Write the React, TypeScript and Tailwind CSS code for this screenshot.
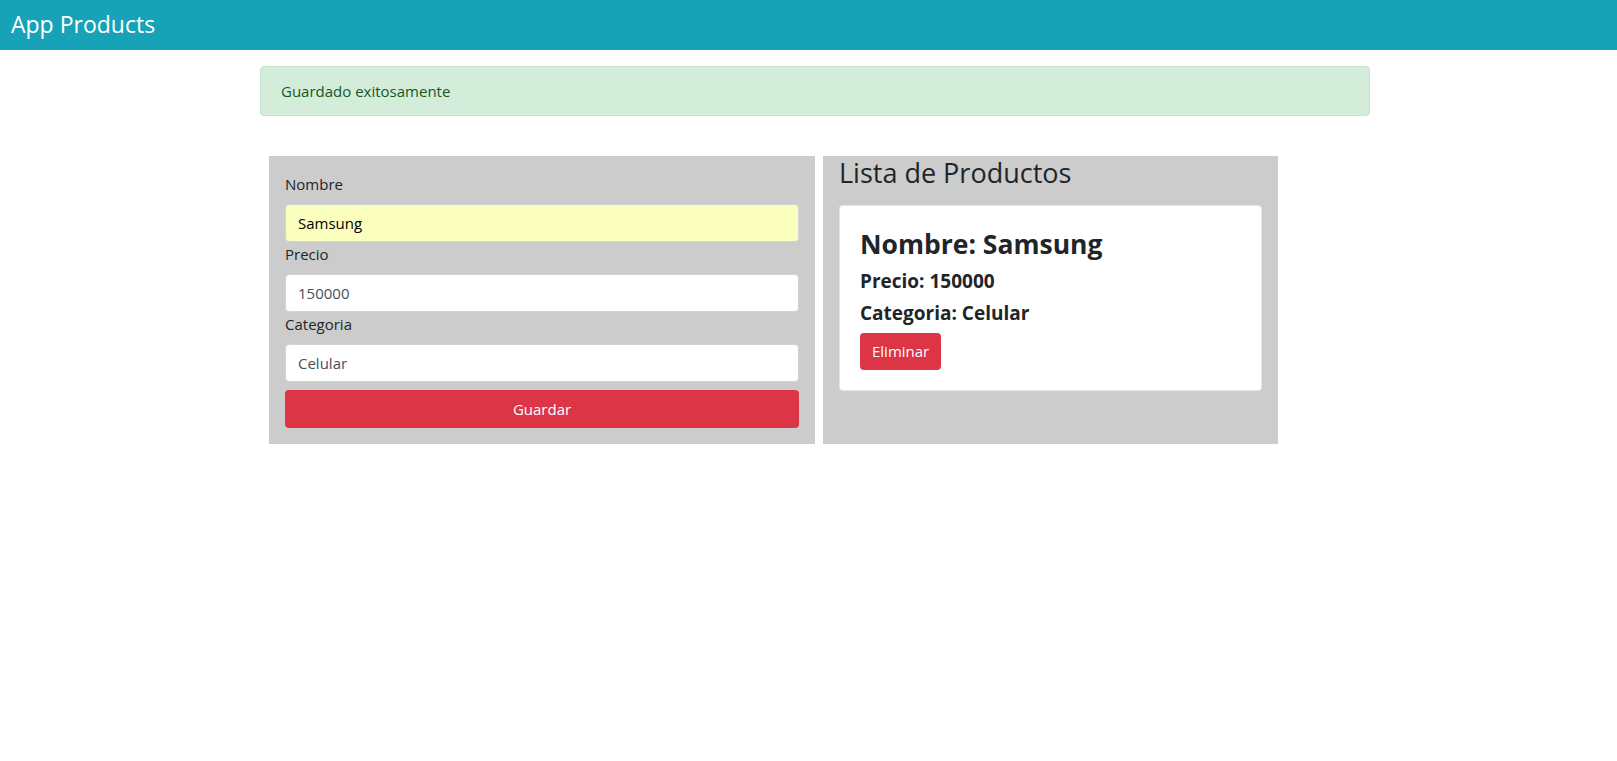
import React from "react";

const fields = [
  { label: "Nombre", value: "Samsung", autofill: true },
  { label: "Precio", value: "150000", autofill: false },
  { label: "Categoria", value: "Celular", autofill: false },
];

export default function App() {
  return (
    <div className="min-h-screen bg-white font-['Open_Sans',sans-serif] text-[#212529]">
      {/* Navbar */}
      <nav className="h-[50px] bg-[#17a2b8] pl-[11px] flex items-center">
        <h1 className="text-[23px] leading-[1.2] text-white">App Products</h1>
      </nav>

      <div className="ml-[260px] w-[1110px]">
        {/* Alert */}
        <div className="mt-4 h-[50px] flex items-center px-5 border border-[#c3e6cb] bg-[#d4edda] text-[#155724] rounded text-[15px]">
          Guardado exitosamente
        </div>

        <div className="mt-10 ml-[9px] flex gap-2">
          {/* Form */}
          <div className="w-[546px] bg-[#cccccc] p-4 flex flex-col">
            {fields.map((f) => (
              <div key={f.label} className="flex flex-col">
                <label className="text-[15px] leading-6 mb-2">{f.label}</label>
                <input
                  readOnly
                  value={f.value}
                  className={`h-[38px] px-3 rounded border border-[#ced4da] text-[15px] outline-none ${
                    f.autofill ? "bg-[#faffbd] text-black" : "bg-white text-[#495057]"
                  }`}
                />
              </div>
            ))}
            <button className="mt-2 h-[38px] rounded bg-[#dc3545] text-white text-[15px]">
              Guardar
            </button>
          </div>

          {/* List */}
          <div className="w-[455px] bg-[#cccccc] px-4 pt-px">
            <h2 className="text-[27px] leading-[1.2] mb-[16px]">Lista de Productos</h2>
            <div className="bg-white border border-black/10 rounded px-5 pt-[23px] pb-5">
              <h3 className="text-[26.5px] font-bold leading-[1.2] mb-2">Nombre: Samsung</h3>
              <h5 className="text-[19px] font-bold leading-6 mb-2">Precio: 150000</h5>
              <h5 className="text-[19px] font-bold leading-6 mb-2">Categoria: Celular</h5>
              <button className="h-[37px] px-3 rounded bg-[#dc3545] text-white text-[15px]">
                Eliminar
              </button>
            </div>
          </div>
        </div>
      </div>
    </div>
  );
}
